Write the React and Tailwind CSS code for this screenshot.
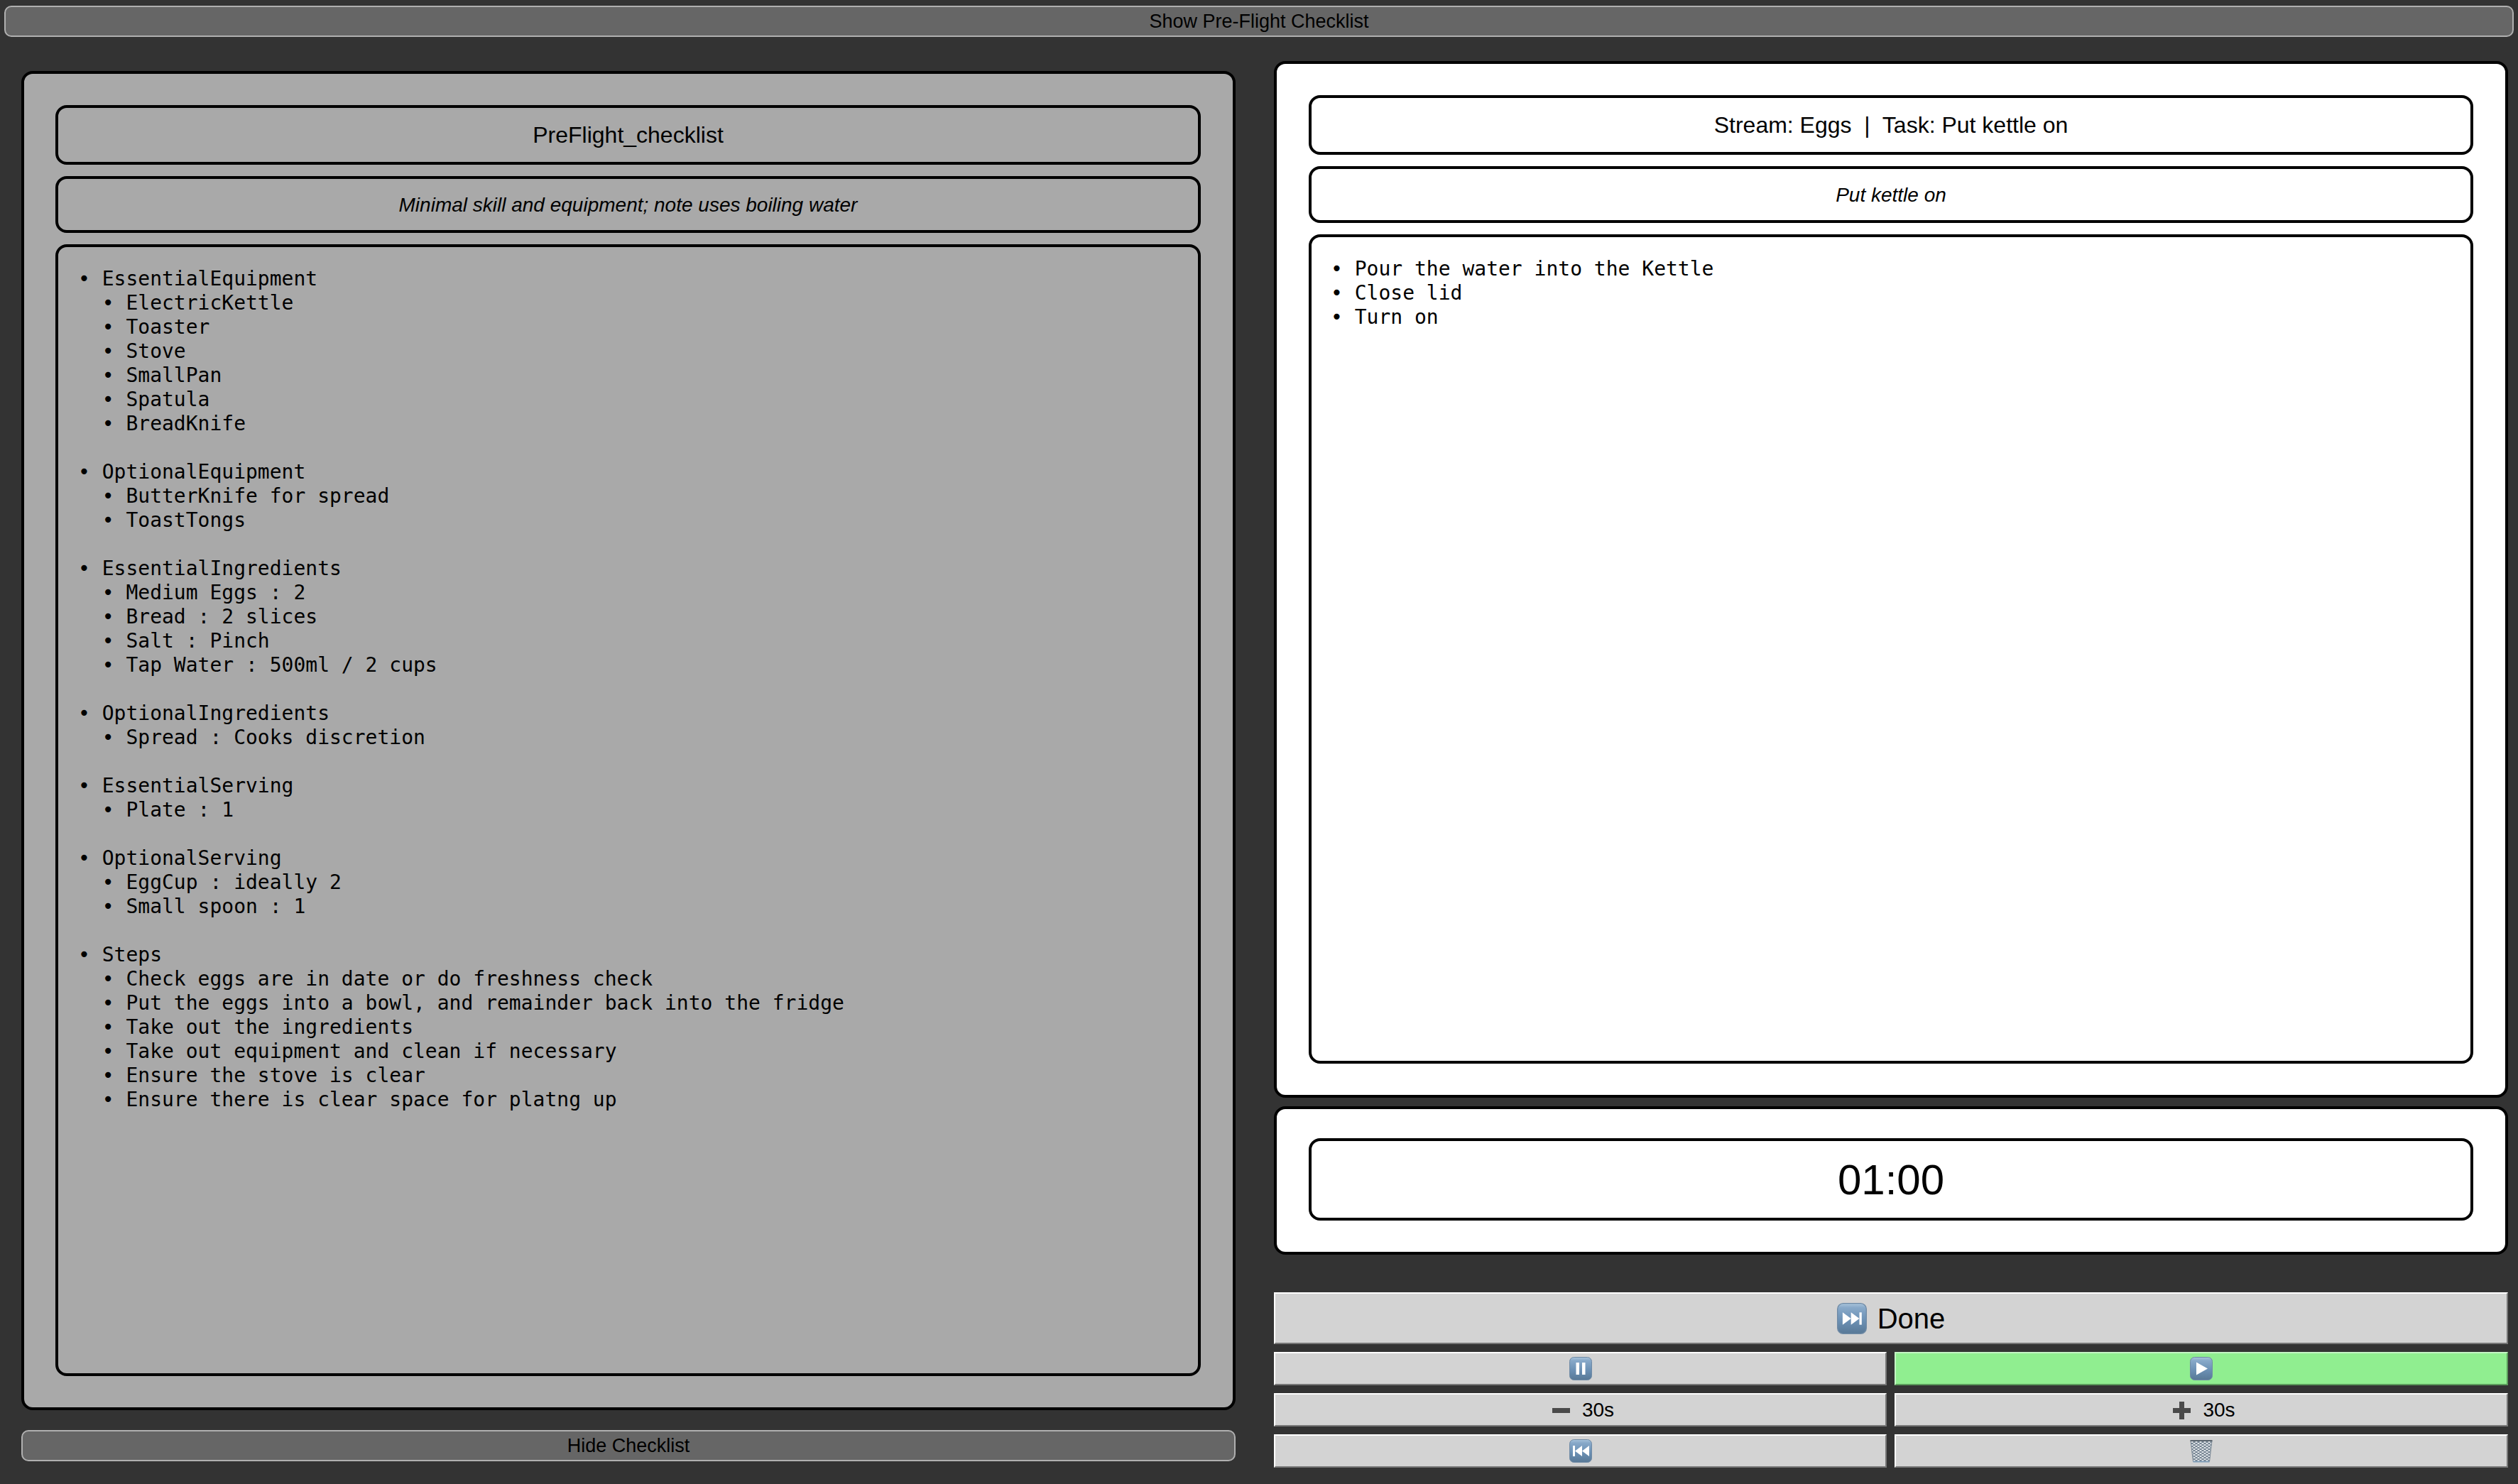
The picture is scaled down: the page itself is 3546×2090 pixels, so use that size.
const checklist = `• EssentialEquipment
  • ElectricKettle
  • Toaster
  • Stove
  • SmallPan
  • Spatula
  • BreadKnife

• OptionalEquipment
  • ButterKnife for spread
  • ToastTongs

• EssentialIngredients
  • Medium Eggs : 2
  • Bread : 2 slices
  • Salt : Pinch
  • Tap Water : 500ml / 2 cups

• OptionalIngredients
  • Spread : Cooks discretion

• EssentialServing
  • Plate : 1

• OptionalServing
  • EggCup : ideally 2
  • Small spoon : 1

• Steps
  • Check eggs are in date or do freshness check
  • Put the eggs into a bowl, and remainder back into the fridge
  • Take out the ingredients
  • Take out equipment and clean if necessary
  • Ensure the stove is clear
  • Ensure there is clear space for platng up`;

const steps = `• Pour the water into the Kettle
• Close lid
• Turn on`;

const sans = "font-['Liberation_Sans',Arial,sans-serif] text-black";
const mono = "font-['DejaVu_Sans_Mono',monospace] text-[28px] leading-[34px] text-black whitespace-pre";

function KeyIcon({ id, className, children }) {
  return (
    <svg viewBox="0 0 32 33" className={className} preserveAspectRatio="none">
      <defs>
        <linearGradient id={id} x1="0" y1="0" x2="0" y2="1">
          <stop offset="0" stopColor="#a9c4dc" />
          <stop offset="0.14" stopColor="#88a9c9" />
          <stop offset="0.55" stopColor="#6c91b5" />
          <stop offset="1" stopColor="#587896" />
        </linearGradient>
      </defs>
      <rect x="0.5" y="0.5" width="31" height="32" rx="6" fill={`url(#${id})`} stroke="#6f8aa5" />
      {children}
    </svg>
  );
}

function TrashIcon() {
  return (
    <svg viewBox="0 0 32 33" className="w-[32px] h-[33px]">
      <defs>
        <pattern id="mesh" width="6" height="4" patternUnits="userSpaceOnUse">
          <path d="M0 0L6 4M6 0L0 4" stroke="#5f7080" strokeWidth="1" fill="none" />
        </pattern>
      </defs>
      <path d="M1 2H31L27.5 31.5H4.5Z" fill="#dfe4e8" />
      <path d="M1 2H31L27.5 31.5H4.5Z" fill="url(#mesh)" />
      <path d="M1 2L4.5 31.5M31 2L27.5 31.5" stroke="#7a8895" strokeWidth="1" />
      <path d="M0.5 2H31.5" stroke="#5c666f" strokeWidth="2" />
      <path d="M4.5 31.5H27.5" stroke="#7f9db8" strokeWidth="2" />
    </svg>
  );
}

function MinusIcon() {
  return (
    <svg viewBox="0 0 25 25" className="w-[25px] h-[25px]">
      <rect x="0" y="9" width="25" height="7" fill="#4a4a4a" />
    </svg>
  );
}

function PlusIcon() {
  return (
    <svg viewBox="0 0 25 25" className="w-[25px] h-[25px]">
      <path d="M0 9H9V0H16V9H25V16H16V25H9V16H0Z" fill="#4a4a4a" />
    </svg>
  );
}

function ToolButton({ children, green }) {
  const skin = green
    ? "bg-[#90ee90] border-t-[#c4f6c4] border-l-[#c4f6c4] border-b-[#5c9c5c] border-r-[#5c9c5c]"
    : "bg-[#d3d3d3] border-t-white border-l-white border-b-[#777777] border-r-[#777777]";
  return (
    <button className={`h-[47px] flex items-center justify-center gap-[17px] text-[28px] border-t-2 border-l-2 border-b-2 border-r-2 ${sans} ${skin}`}>
      {children}
    </button>
  );
}

function Box({ children, className }) {
  return <div className={`border-4 border-black rounded-[16px] ${className}`}>{children}</div>;
}

function DarkButton({ children, className }) {
  return (
    <button className={`h-[44px] flex items-center justify-center bg-[#666666] border-2 border-[#b0b0b0] rounded-[10px] text-[27px] ${sans} ${className}`}>
      {children}
    </button>
  );
}

export default function App() {
  return (
    <div className="w-[3546px] h-[2090px] overflow-hidden bg-[#333333] pt-[8px]">
      <DarkButton className="mx-[6px] w-[3534px]">Show Pre-Flight Checklist</DarkButton>

      <div className="flex pl-[30px] gap-[54px]">
        <div className="w-[1710px] pt-[48px] flex flex-col">
          <Box className="h-[1886px] bg-[#a9a9a9] pt-[44px] pb-[44px] pl-[44px] pr-[45px] flex flex-col gap-[16px]">
            <Box className={`h-[84px] flex items-center justify-center text-[32px] ${sans}`}>PreFlight_checklist</Box>
            <Box className={`h-[80px] pt-px flex items-center justify-center text-[28px] italic ${sans}`}>
              Minimal skill and equipment; note uses boiling water
            </Box>
            <Box className={`flex-1 pt-[28px] pl-[28px] ${mono}`}>{checklist}</Box>
          </Box>
          <DarkButton className="mt-[28px] w-full">Hide Checklist</DarkButton>
        </div>

        <div className="w-[1738px] pt-[34px] flex flex-col">
          <Box className="h-[1460px] bg-white pt-[44px] pb-[44px] px-[45px] flex flex-col gap-[16px]">
            <Box className={`h-[84px] flex items-center justify-center text-[32px] whitespace-pre ${sans}`}>
              Stream: Eggs  |  Task: Put kettle on
            </Box>
            <Box className={`h-[80px] pt-px flex items-center justify-center text-[28px] italic ${sans}`}>Put kettle on</Box>
            <Box className={`flex-1 pt-[28px] pl-[27px] ${mono}`}>{steps}</Box>
          </Box>

          <Box className="h-[209px] mt-[12px] bg-white pt-[41px] px-[45px]">
            <Box className={`h-[116px] pt-[2px] flex items-center justify-center text-[60px] ${sans}`}>01:00</Box>
          </Box>

          <button className={`h-[73px] mt-[53px] pt-px flex items-center justify-center gap-[15px] bg-[#d3d3d3] text-[40px] border-t-2 border-l-2 border-b-2 border-r-2 border-t-white border-l-white border-b-[#777777] border-r-[#777777] ${sans}`}>
            <KeyIcon id="next" className="w-[42px] h-[44px]">
              <path d="M6 10L15 16.5L6 23ZM15 10L24 16.5L15 23Z" fill="#ffffff" />
              <rect x="24" y="10" width="2.5" height="13" fill="#ffffff" />
            </KeyIcon>
            Done
          </button>

          <div className="grid grid-cols-[863px_1fr] gap-[11px] mt-[11px]">
            <ToolButton>
              <KeyIcon id="pause" className="w-[32px] h-[33px]">
                <rect x="9.5" y="8" width="4.5" height="17" fill="#ffffff" />
                <rect x="18" y="8" width="4.5" height="17" fill="#ffffff" />
              </KeyIcon>
            </ToolButton>
            <ToolButton green>
              <KeyIcon id="play" className="w-[32px] h-[33px]">
                <path d="M9 7.5L25 16.5L9 25.5Z" fill="#ffffff" />
              </KeyIcon>
            </ToolButton>
            <ToolButton>
              <span className="flex items-center gap-[17px] pl-[8px] pt-px">
                <MinusIcon />
                <span>30s</span>
              </span>
            </ToolButton>
            <ToolButton>
              <span className="flex items-center gap-[17px] pl-[8px] pt-px">
                <PlusIcon />
                <span>30s</span>
              </span>
            </ToolButton>
            <ToolButton>
              <KeyIcon id="prev" className="w-[32px] h-[33px]">
                <rect x="5" y="9" width="3" height="15" fill="#ffffff" />
                <path d="M18 9L8 16.5L18 24ZM28 9L18 16.5L28 24Z" fill="#ffffff" />
              </KeyIcon>
            </ToolButton>
            <ToolButton>
              <TrashIcon />
            </ToolButton>
          </div>
        </div>
      </div>
    </div>
  );
}
